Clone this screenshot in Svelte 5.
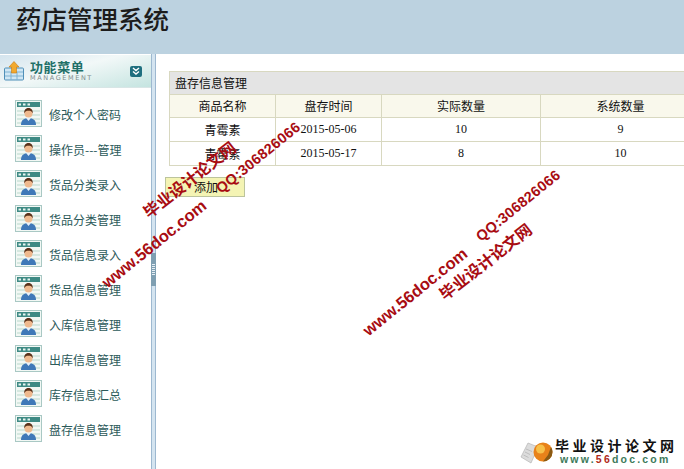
<script>
  const menu = [
    "修改个人密码", "操作员---管理", "货品分类录入", "货品分类管理", "货品信息录入",
    "货品信息管理", "入库信息管理", "出库信息管理", "库存信息汇总", "盘存信息管理",
  ];
  const columns = ["商品名称", "盘存时间", "实际数量", "系统数量"];
  const rows = [
    ["青霉素", "2015-05-06", "10", "9"],
    ["青霉素", "2015-05-17", "8", "10"],
  ];
</script>

<div class="page">
  <header class="top">
    <h1>药店管理系统</h1>
  </header>

  <div class="body">
    <aside class="side">
      <div class="side-head">
        <svg class="head-icon" viewBox="0 0 20 20">
          <rect x="0.5" y="7" width="19" height="12" rx="1" fill="#cfe6f4" stroke="#4f8fb8"/>
          <path d="M1 11h18M7 11v8M13 11v8M1 15h18" stroke="#7fb2d2" fill="none"/>
          <path d="M10 0.5L15 6h-2.5v6h-5V6H5z" fill="#f2a92e" stroke="#c87a12" stroke-width="0.6"/>
        </svg>
        <div class="head-text">
          <div class="head-title">功能菜单</div>
          <div class="head-sub">MANAGEMENT</div>
        </div>
        <svg class="head-toggle" viewBox="0 0 12 11">
          <rect width="12" height="11" rx="2" fill="#1f6f7f"/>
          <path d="M3 2l3 2.5L9 2M3 5.5L6 8l3-2.5" fill="none" stroke="#fff" stroke-width="1.4"/>
        </svg>
      </div>

      <ul class="menu">
        {#each menu as label}
          <li>
            <svg class="item-icon" viewBox="0 0 27 27">
              <rect x="0.5" y="0.5" width="26" height="26" fill="#f2f8f4" stroke="#a9c8c4"/>
              <rect x="2" y="2" width="23" height="5" fill="#3e8a84"/>
              <path d="M3.5 3.5h2.5v2h-2.5zM8 3.5h2.5v2H8zM12.5 3.5H15v2h-2.5z" fill="#e8f4f0"/>
              <path d="M2 11h23M2 15h23M2 19h23M2 23h23" stroke="#b9d8cc"/>
              <path d="M6 25c0-5 3-7 7.500-7s7.500 2 7.500 7z" fill="#3f78b8"/>
              <path d="M11 18l2.500 3 2.500-3z" fill="#e8f0f8"/>
              <circle cx="13.500" cy="13.500" r="4" fill="#eeb98e"/>
              <path d="M9.300 13.500c-.5-4 2-5.500 4.200-5.500s4.700 1.500 4.200 5.500c-1-2.500-2-2.800-4.200-2.800s-3.200.3-4.200 2.800z" fill="#5a3018"/>
            </svg>
            <span>{label}</span>
          </li>
        {/each}
      </ul>
    </aside>

    <div class="divider"><div class="grip"></div></div>

    <main class="main">
      <table>
        <colgroup>
          <col class="c1" /><col class="c2" /><col class="c3" /><col class="c4" />
        </colgroup>
        <thead>
          <tr><th class="caption" colspan="4"><span>盘存信息管理</span></th></tr>
          <tr class="heads">
            {#each columns as col}<th><span>{col}</span></th>{/each}
          </tr>
        </thead>
        <tbody>
          {#each rows as row}
            <tr>
              {#each row as cell}<td>{cell}</td>{/each}
            </tr>
          {/each}
        </tbody>
      </table>
      <button class="add">添加</button>
    </main>
  </div>

  <div class="mark m1">www.56doc.com</div>
  <div class="mark m2">毕业设计论文网</div>
  <div class="mark m3">QQ:306826066</div>
  <div class="mark m4">www.56doc.com</div>
  <div class="mark m5">QQ:306826066</div>
  <div class="mark m6">毕业设计论文网</div>

  <div class="logo">
    <svg class="logo-art" viewBox="0 0 34 26">
      <path d="M1 18L8 4l10 4-7 16z" fill="#dcdcdc" stroke="#b4b4b4" stroke-width="0.7"/>
      <path d="M6 10l6 2.500M5 13l5 2.500M3.500 16l5 2.500" stroke="#a8a8a8" stroke-width="0.6"/>
      <circle cx="23" cy="13" r="9.500" fill="#e8821a"/>
      <circle cx="20.500" cy="10" r="4.500" fill="#f7c04a"/>
      <path d="M23 22.500a9.500 9.500 0 0 0 9.500-9.500c0-2-.6-3.500-1.500-5l-3 8z" fill="#8a5a14"/>
    </svg>
    <div class="logo-text">
      <div class="logo-cn">毕业设计论文网</div>
      <div class="logo-en">www.<b>56</b>doc.com</div>
    </div>
  </div>
</div>

<style>
  :global(body) {
    margin: 0;
  }

  .page {
    position: relative;
    width: 684px;
    height: 469px;
    overflow: hidden;
    background: #fff;
    font-family: "Noto Sans CJK SC", "Liberation Sans", sans-serif;
    font-size: 12px;
    color: #111;
  }

  .top {
    height: 54px;
    background: #bcd2e0;
    box-sizing: border-box;
    padding: 1px 0 0 16px;
  }

  h1 {
    margin: 0;
    font-size: 25.5px;
    line-height: 34px;
    font-weight: 500;
    color: #1c1c1c;
  }

  .body {
    display: flex;
    height: 415px;
  }

  .side {
    width: 151px;
    flex-shrink: 0;
  }

  .side-head {
    display: flex;
    align-items: center;
    height: 32px;
    margin-top: 1px;
    padding: 0 9px 0 4px;
    background: linear-gradient(165deg, #d4e4ee 0%, #f2f8f8 45%, #c4e4e0 100%);
    border-bottom: 1px solid #d8e6e6;
  }

  .head-icon {
    width: 20px;
    height: 20px;
    margin-right: 6px;
  }

  .head-text {
    flex: 1;
  }

  .head-title {
    font-size: 13px;
    line-height: 14px;
    font-weight: 700;
    letter-spacing: 0.6px;
    color: #1f7068;
  }

  .head-sub {
    font-family: "DejaVu Sans", sans-serif;
    font-size: 6.500px;
    line-height: 9px;
    letter-spacing: 1.6px;
    color: #7f8c8c;
  }

  .head-toggle {
    width: 12px;
    height: 11px;
  }

  .menu {
    list-style: none;
    margin: 0;
    padding: 12px 0 0 15px;
    display: flex;
    flex-direction: column;
    gap: 8px;
  }

  .menu li {
    display: flex;
    align-items: center;
    gap: 7px;
    height: 27px;
    color: #2c5a5a;
  }

  .menu span {
    padding-top: 2px;
  }

  .item-icon {
    width: 27px;
    height: 27px;
    flex-shrink: 0;
  }

  .divider {
    position: relative;
    width: 5px;
    flex-shrink: 0;
    box-sizing: border-box;
    background: #d4e4f0;
    border-left: 1px solid #9db8d0;
    border-right: 1px solid #9db8d0;
  }

  .grip {
    position: absolute;
    top: 199px;
    left: -1px;
    width: 5px;
    height: 33px;
    background:
      repeating-linear-gradient(#e6eef4 0 1px, #7f9fb2 1px 2px) 1px 11px / 3px 11px no-repeat,
      #7f9fb2;
  }

  .main {
    flex: 1;
    min-width: 0;
    overflow: hidden;
    padding: 17px 0 0 9px;
  }

  table {
    width: 531px;
    margin-left: 4px;
    table-layout: fixed;
    border-collapse: collapse;
    text-align: center;
    background: #fff;
  }

  .c1 { width: 106px; }
  .c2 { width: 106px; }
  .c3 { width: 159px; }
  .c4 { width: 160px; }

  th, td {
    border: 1px solid #d8d8c0;
    padding: 0;
    font-weight: 400;
  }

  th span {
    position: relative;
    top: -1px;
  }

  .caption {
    height: 22px;
    padding-left: 5px;
    text-align: left;
    background: #e4e4e4;
  }

  .heads th {
    height: 22px;
    background: #f9f8ec;
  }

  td {
    height: 23px;
    font-family: "Liberation Serif", "Noto Sans CJK SC", serif;
  }

  td:first-child {
    font-family: "Noto Sans CJK SC", sans-serif;
  }

  .add {
    display: block;
    width: 80px;
    height: 20px;
    margin-top: 11px;
    padding: 0 0 3px 2px;
    font: inherit;
    color: #111;
    background: #f4f4b4;
    border: 1px solid #bcc49c;
  }

  .mark {
    position: absolute;
    transform-origin: 0 50%;
    transform: rotate(-39deg);
    white-space: nowrap;
    line-height: 1;
    font-weight: 700;
    color: #a80c12;
    font-family: "Liberation Sans", "Noto Sans CJK SC", sans-serif;
  }

  .m1 { left: 104px; top: 276px; font-size: 16.500px; }
  .m2 { left: 146px; top: 207px; font-size: 16px; transform: rotate(-38deg); }
  .m3 { left: 218px; top: 183px; font-size: 14.500px; letter-spacing: 0.3px; }
  .m4 { left: 365px; top: 324px; font-size: 16.500px; }
  .m5 { left: 478px; top: 231px; font-size: 14.500px; letter-spacing: 0.3px; }
  .m6 { left: 442px; top: 289px; font-size: 16px; transform: rotate(-38deg); }

  .logo {
    position: absolute;
    left: 520px;
    bottom: 4px;
    display: flex;
    align-items: center;
    gap: 1px;
  }

  .logo-art {
    width: 34px;
    height: 26px;
  }

  .logo-cn {
    font-size: 14px;
    line-height: 15px;
    font-weight: 700;
    letter-spacing: 3.500px;
    color: #111;
  }

  .logo-en {
    padding-left: 5px;
    font-family: "Liberation Sans", sans-serif;
    font-size: 10.500px;
    line-height: 12px;
    font-weight: 700;
    letter-spacing: 2.200px;
    color: #3d7a5a;
  }

  .logo-en b {
    color: #b02a1a;
  }
</style>
